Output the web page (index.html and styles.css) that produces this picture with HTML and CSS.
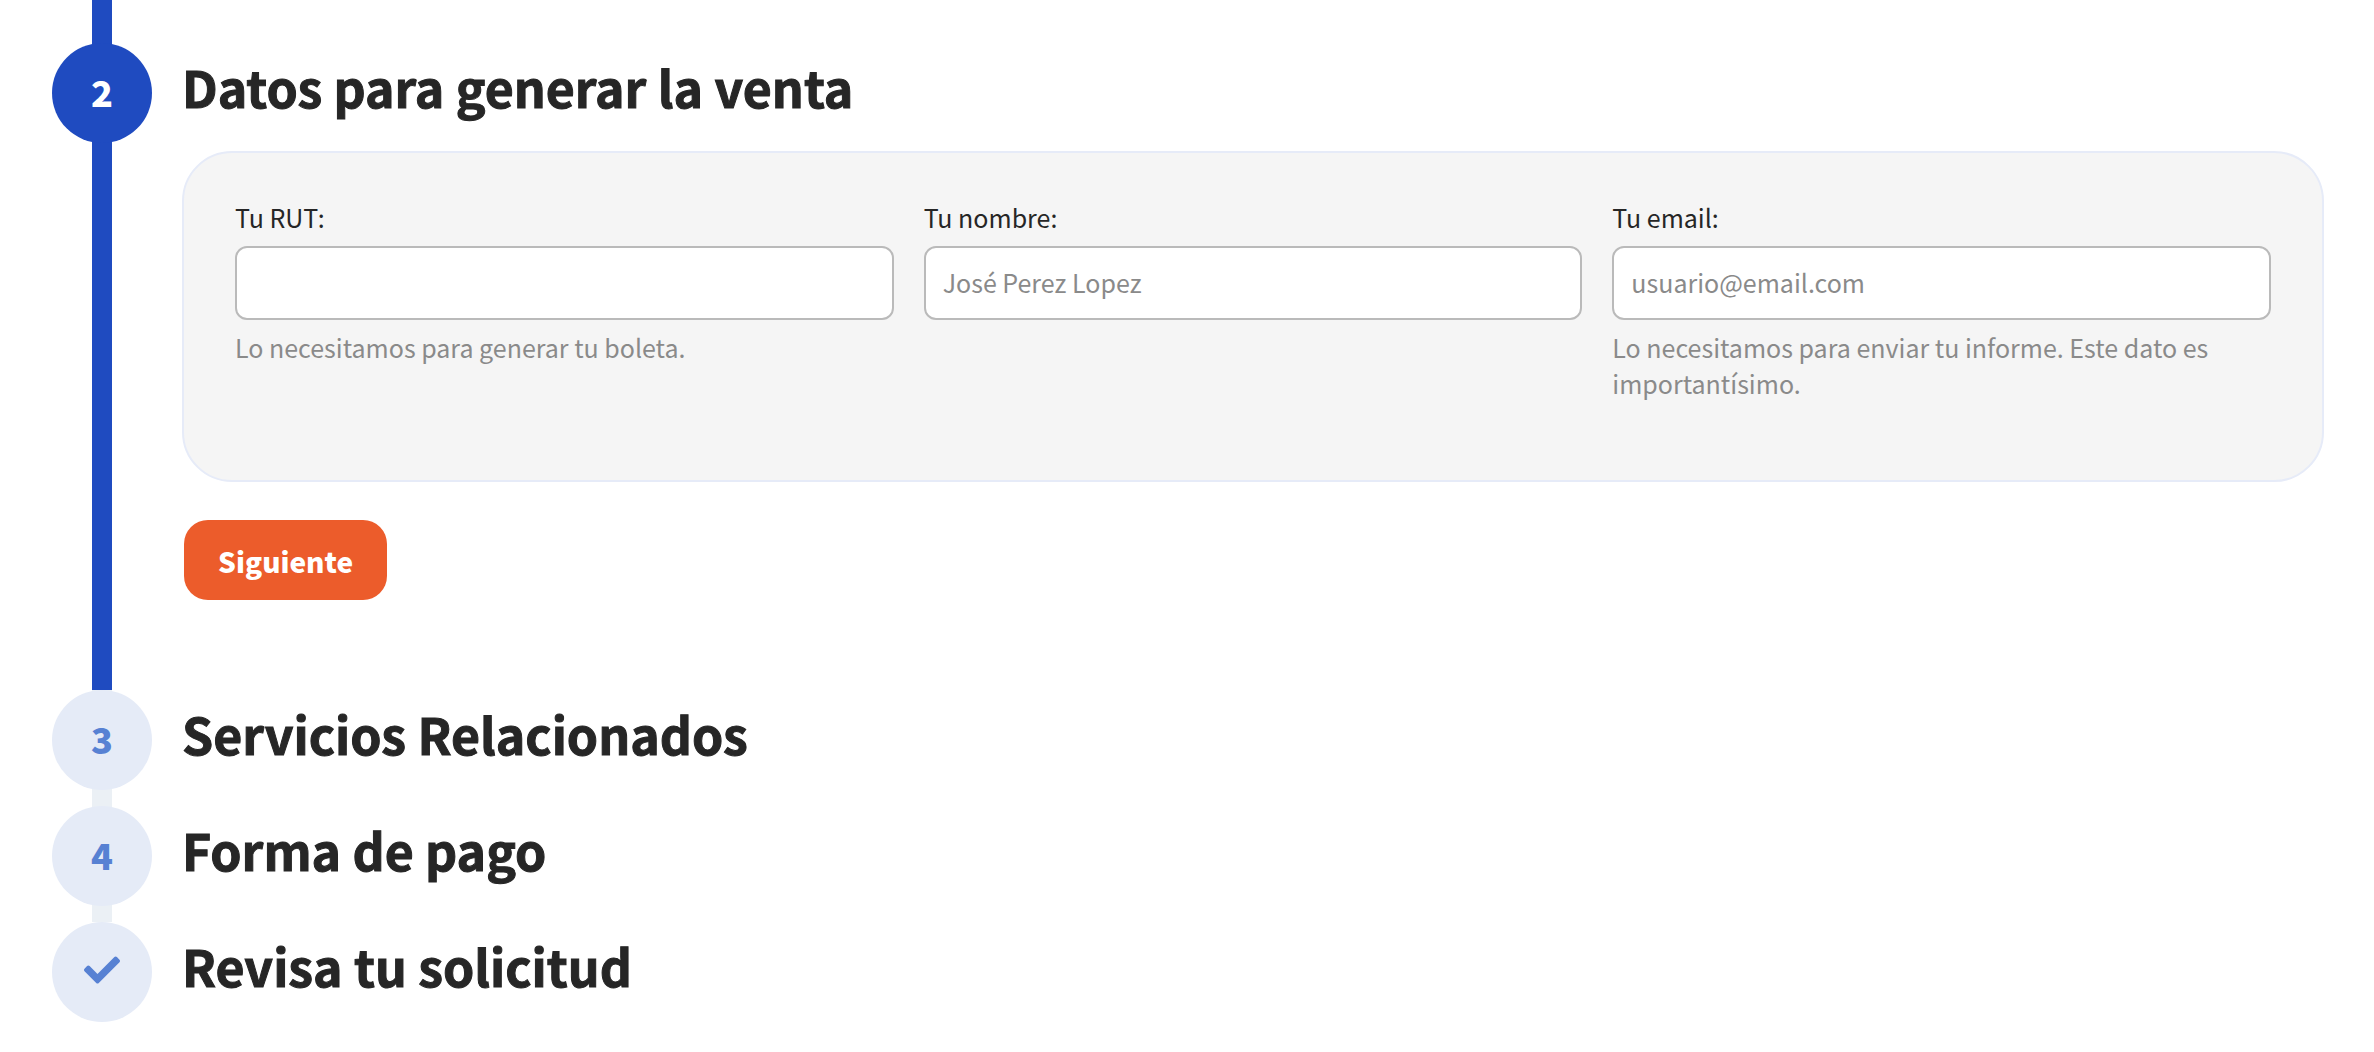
FILE: index.html
```html
<!DOCTYPE html>
<html lang="es">
<head>
    <meta charset="UTF-8">
    <meta name="viewport" content="width=device-width, initial-scale=1.0">
    <title>Solicitud de informe</title>
    <link rel="stylesheet" href="styles.css">
</head>
<body>
    <main class="stepper">
        <section class="step step-active">
            <div class="step-rail"><span class="step-number">2</span></div>
            <div class="step-content">
                <h2 class="step-title">Datos para generar la venta</h2>
                <form class="step-form">
                    <div class="form-card">
                        <div class="form-group">
                            <label for="rut">Tu RUT:</label>
                            <input type="text" id="rut">
                            <small class="form-help">Lo necesitamos para generar tu boleta.</small>
                        </div>
                        <div class="form-group">
                            <label for="nombre">Tu nombre:</label>
                            <input type="text" id="nombre" placeholder="José Perez Lopez">
                        </div>
                        <div class="form-group">
                            <label for="email">Tu email:</label>
                            <input type="email" id="email" placeholder="usuario@email.com">
                            <small class="form-help">Lo necesitamos para enviar tu informe. Este dato es importantísimo.</small>
                        </div>
                    </div>
                    <button type="button" class="next-btn">Siguiente</button>
                </form>
            </div>
        </section>

        <section class="step">
            <div class="step-rail"><span class="step-number">3</span></div>
            <h2 class="step-title">Servicios Relacionados</h2>
        </section>

        <section class="step">
            <div class="step-rail"><span class="step-number">4</span></div>
            <h2 class="step-title">Forma de pago</h2>
        </section>

        <section class="step">
            <div class="step-rail">
                <span class="step-number">
                    <svg class="check-icon" viewBox="0 0 512 512" aria-hidden="true">
                        <path d="M173.898 439.404l-166.4-166.4c-9.997-9.997-9.997-26.206 0-36.204l36.203-36.204c9.997-9.998 26.207-9.998 36.204 0L192 312.69 432.095 72.596c9.997-9.997 26.207-9.997 36.204 0l36.203 36.204c9.997 9.997 9.997 26.206 0 36.204l-294.4 294.401c-9.998 9.997-26.207 9.997-36.204-.001z"/>
                    </svg>
                </span>
            </div>
            <h2 class="step-title">Revisa tu solicitud</h2>
        </section>
    </main>
</body>
</html>
```
FILE: styles.css
```css
* {
    margin: 0;
    padding: 0;
    box-sizing: border-box;
    font-family: 'Noto Sans CJK JP', 'Noto Sans', sans-serif;
}
body {
    background: #fff;
    color: #262626;
}
.stepper {
    padding: 0 50px 0 52px;
}
.step {
    display: flex;
    gap: 30px;
    min-height: 116px;
}
.step-rail {
    flex: none;
    width: 100px;
    background: linear-gradient(#ebf0f5, #ebf0f5) center / 20px 100% no-repeat;
}
.step-active .step-rail {
    padding-top: 43px;
    background-image: linear-gradient(#1f4bc0, #1f4bc0);
}
.step:last-child .step-rail {
    background: none;
}
.step-number {
    display: flex;
    align-items: center;
    justify-content: center;
    height: 100px;
    padding-bottom: 4px;
    border-radius: 50%;
    background: #e5ebf7;
    color: #5781d3;
    font-size: 36px;
    font-weight: 900;
    line-height: 48px;
}
.step-active .step-number {
    background: #1f4bc0;
    color: #fff;
}
.check-icon {
    width: 36px;
    height: 36px;
    fill: currentColor;
}
.step-content {
    flex: 1;
    padding: 43px 0 90px;
}
.step-title {
    height: 100px;
    font-size: 50px;
    font-weight: bold;
    line-height: 86px;
    -webkit-text-stroke: 1px currentColor;
}
.form-card {
    display: grid;
    grid-template-columns: repeat(3, 1fr);
    gap: 30px;
    margin-top: 8px;
    padding: 46px 51px 79px;
    background: #f5f5f5;
    border: 2px solid #e6ebf8;
    border-radius: 50px;
}
.form-group {
    font-size: 25px;
    line-height: 36px;
}
.form-group label {
    display: block;
    margin-bottom: 11px;
}
.form-group input {
    display: block;
    width: 100%;
    height: 74px;
    padding: 0 17px 2px;
    background: #fff;
    border: 2px solid #bababa;
    border-radius: 12px;
    font-size: 25px;
}
.form-group input::placeholder {
    color: #8a8a8a;
}
.form-help {
    display: block;
    margin-top: 9px;
    color: #8a8a8a;
    font-size: 25px;
}
.next-btn {
    display: block;
    margin: 38px 0 0 2px;
    padding: 2px 34px 0;
    height: 80px;
    background: #ec5c2b;
    border: none;
    border-radius: 24px;
    color: #fff;
    font-size: 28px;
    font-weight: 900;
    cursor: pointer;
}
```
